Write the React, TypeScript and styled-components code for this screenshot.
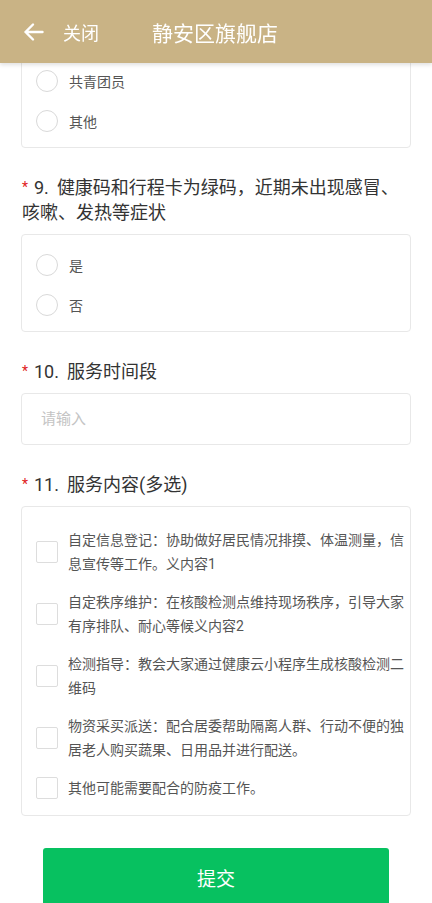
import styled, {createGlobalStyle} from "styled-components";

const GlobalStyle = createGlobalStyle`
  body {
    margin: 0;
    background: #ffffff;
    font-family: Roboto, "Noto Sans CJK SC", sans-serif;
  }
`

const Header = styled.div`
  position: fixed;
  top: 0;
  left: 0;
  right: 0;
  height: 63px;
  background-color: #c9b385;
  box-shadow: 0 2px 4px rgba(0, 0, 0, 0.12);
  display: flex;
  align-items: center;
  z-index: 10;
`

const Back = styled.div`
  display: flex;
  align-items: center;
  gap: 19px;
  padding-left: 23px;
  color: #ffffff;
  font-size: 18px;
  width: 129px;
`

const HeaderTitle = styled.div`
  color: #ffffff;
  font-size: 21px;
  flex: 1;
`

const Content = styled.div`
  padding: 50px 21px 0;
  display: flex;
  flex-direction: column;
`

const Card = styled.div<{ $pad?: string }>`
  background: #ffffff;
  border: 1px solid #e8e8e8;
  border-radius: 4px;
  padding: ${p => p.$pad || "10px 0 6px"};
`

const RadioRow = styled.div`
  height: 40px;
  display: flex;
  align-items: center;
  padding-left: 14px;
  gap: 11px;
  font-size: 14px;
  color: #555555;
`

const Circle = styled.span`
  width: 22px;
  height: 22px;
  border: 1px solid #d9d9d9;
  border-radius: 50%;
  box-sizing: border-box;
  flex-shrink: 0;
`

const Question = styled.div`
  margin: 27px 0 9px 1px;
  font-size: 18px;
  line-height: 25px;
  color: #333333;
`

const Num = styled.span`
  margin-right: 8px;
`

const Star = styled.span`
  display: inline-block;
  width: 12px;
  color: #e02020;
  font-size: 14px;
  line-height: 14px;
  vertical-align: 2px;
`

const Input = styled.input`
  height: 52px;
  box-sizing: border-box;
  border: 1px solid #e8e8e8;
  border-radius: 4px;
  padding: 0 19px;
  font-size: 15px;
  font-family: inherit;
  outline: none;
  &::placeholder {
    color: #c4c4c4;
  }
`

const CheckRow = styled.div`
  display: flex;
  align-items: center;
  padding: 7px 4px 7px 14px;
  gap: 10px;
`

const Box = styled.span`
  width: 22px;
  height: 22px;
  border: 1px solid #dddddd;
  border-radius: 2px;
  box-sizing: border-box;
  flex-shrink: 0;
`

const CheckText = styled.div`
  font-size: 14px;
  line-height: 24px;
  color: #555555;
`

const Submit = styled.button`
  margin: 32px 22px 0;
  height: 58px;
  border: none;
  border-radius: 3px;
  background-color: #07c160;
  color: #ffffff;
  font-size: 19px;
  font-family: inherit;
`

const services = [
    "自定信息登记：协助做好居民情况排摸、体温测量，信息宣传等工作。义内容1",
    "自定秩序维护：在核酸检测点维持现场秩序，引导大家有序排队、耐心等候义内容2",
    "检测指导：教会大家通过健康云小程序生成核酸检测二维码",
    "物资采买派送：配合居委帮助隔离人群、行动不便的独居老人购买蔬果、日用品并进行配送。",
    "其他可能需要配合的防疫工作。",
]

const App = () => {
    return (
        <>
            <GlobalStyle/>
            <Header>
                <Back>
                    <svg width="21" height="20" viewBox="0 0 21 20" fill="none" stroke="#fff" strokeWidth="2.4"
                         strokeLinecap="round" strokeLinejoin="round">
                        <path d="M19.5 10H2.5M10 2.5L2.5 10l7.5 7.5"/>
                    </svg>
                    关闭
                </Back>
                <HeaderTitle>静安区旗舰店</HeaderTitle>
            </Header>
            <Content>
                <Card>
                    <RadioRow><Circle/>共青团员</RadioRow>
                    <RadioRow><Circle/>其他</RadioRow>
                </Card>

                <Question><Star>*</Star><Num>9.</Num>健康码和行程卡为绿码，近期未出现感冒、咳嗽、发热等症状</Question>
                <Card>
                    <RadioRow><Circle/>是</RadioRow>
                    <RadioRow><Circle/>否</RadioRow>
                </Card>

                <Question><Star>*</Star><Num>10.</Num>服务时间段</Question>
                <Input placeholder="请输入"/>

                <Question><Star>*</Star><Num>11.</Num>服务内容(多选)</Question>
                <Card $pad="14px 0 8px">
                    {services.map(s => (
                        <CheckRow key={s}>
                            <Box/>
                            <CheckText>{s}</CheckText>
                        </CheckRow>
                    ))}
                </Card>

                <Submit>提交</Submit>
            </Content>
        </>
    )
}

export default App
